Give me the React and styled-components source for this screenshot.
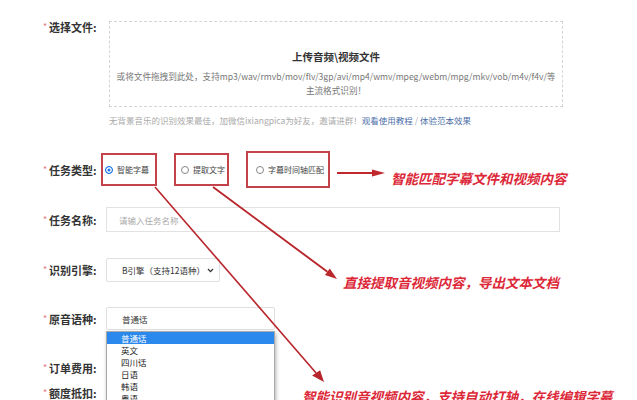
import styled, { createGlobalStyle } from 'styled-components';

const GlobalStyle = createGlobalStyle`
  html, body {
    margin: 0;
    padding: 0;
    background: #ffffff;
    overflow: hidden;
  }
  body {
    font-family: "Noto Sans CJK SC", "Noto Sans", sans-serif;
    color: #333333;
  }
`;

const radioOptions = [
  { label: '智能字幕', checked: true, pad: '0 6px 0 2px', height: 33 },
  { label: '提取文字', checked: false, pad: '0 2px 0 5px', height: 33 },
  { label: '字幕时间轴匹配', checked: false, pad: '0 4px 0 8px', height: 37 },
];

const languages = ['普通话', '英文', '四川话', '日语', '韩语', '粤语'];

const App = () => {
  return (
    <Page>
      <GlobalStyle />
      <Form>
        <FileRow>
          <Label>
            <Star>*</Star>选择文件:
          </Label>
          <FileColumn>
            <DropZone>
              <DropTitle>上传音频\视频文件</DropTitle>
              <DropDesc>
                <span>
                  或将文件拖拽到此处，支持mp3/wav/rmvb/mov/flv/3gp/avi/mp4/wmv/mpeg/webm/mpg/mkv/vob/m4v/f4v/等
                </span>
                <span>主流格式识别！</span>
              </DropDesc>
            </DropZone>
            <Hint>
              无背景音乐的识别效果最佳，加微信ixiangpica为好友，邀请进群！
              <HintLink>观看使用教程</HintLink> / <HintLink>体验范本效果</HintLink>
            </Hint>
          </FileColumn>
        </FileRow>

        <TypeRow>
          <Label>
            <Star>*</Star>任务类型:
          </Label>
          <RadioGroup>
            {radioOptions.map((o) => (
              <RadioOption key={o.label} $pad={o.pad} $height={o.height}>
                <RadioDot $checked={o.checked} />
                {o.label}
              </RadioOption>
            ))}
          </RadioGroup>
          <ArrowIcon width="48" height="10" viewBox="0 0 48 10">
            <line x1="0" y1="5" x2="38" y2="5" stroke="#c0282e" strokeWidth="1.8" />
            <polygon points="35,1.5 48,5 35,8.5" fill="#c0282e" />
          </ArrowIcon>
          <Note $left={6} $top={18}>智能匹配字幕文件和视频内容</Note>
        </TypeRow>

        <NameRow>
          <Label>
            <Star>*</Star>任务名称:
          </Label>
          <TextInput placeholder="请输入任务名称" />
        </NameRow>

        <EngineRow>
          <Label>
            <Star>*</Star>识别引擎:
          </Label>
          <SelectBox $width={114} $height={24}>
            B引擎（支持12语种）
            <Chevron width="7" height="5" viewBox="0 0 7 5">
              <path d="M1 1 L3.5 3.6 L6 1" fill="none" stroke="#333" strokeWidth="1.3" />
            </Chevron>
          </SelectBox>
          <Note $left={123} $top={15}>直接提取音视频内容，导出文本文档</Note>
        </EngineRow>

        <LangRow>
          <Label>
            <Star>*</Star>原音语种:
          </Label>
          <SelectWrap>
            <SelectBox $width={169} $height={23}>普通话</SelectBox>
            <OptionList>
              {languages.map((l, i) => (
                <OptionItem key={l} $active={i === 0}>
                  {l}
                </OptionItem>
              ))}
            </OptionList>
          </SelectWrap>
        </LangRow>

        <PlainRow $top={31}>
          <Label>
            <Star>*</Star>订单费用:
          </Label>
        </PlainRow>

        <PlainRow $top={11}>
          <Label>
            <Star>*</Star>额度抵扣:
          </Label>
          <Note $left={196} $top={1}>智能识别音视频内容，支持自动打轴，在线编辑字幕</Note>
        </PlainRow>
      </Form>

      <Overlay width="637" height="400" viewBox="0 0 637 400">
        <line x1="155" y1="187" x2="316.1" y2="372.9" stroke="#b8262c" strokeWidth="1.6" />
        <polygon points="324,382 312.1,375.5 320.1,370.3" fill="#b8262c" />
        <line x1="213" y1="187" x2="327.4" y2="271.8" stroke="#b8262c" strokeWidth="1.9" />
        <polygon points="337,279 325,275 329.8,268.6" fill="#b8262c" />
      </Overlay>
    </Page>
  );
};

export default App;

const Page = styled.div`
  position: relative;
  width: 637px;
  height: 400px;
  overflow: hidden;
  background: #ffffff;
`;

const Form = styled.div`
  display: flex;
  flex-direction: column;
  padding: 21px 0 0 43px;
`;

const Label = styled.div`
  display: flex;
  align-items: center;
  flex: none;
  width: 63px;
  height: 12px;
  font-size: 11px;
  font-weight: 700;
  line-height: 12px;
  color: #333333;
  white-space: nowrap;
`;

const Star = styled.span`
  width: 6px;
  font-size: 9px;
  font-weight: 400;
  line-height: 12px;
  color: #e77b7b;
`;

const FileRow = styled.div`
  display: flex;
  align-items: flex-start;
`;

const FileColumn = styled.div`
  display: flex;
  flex-direction: column;
  margin-left: 3px;
`;

const DropZone = styled.div`
  display: flex;
  flex-direction: column;
  align-items: center;
  box-sizing: border-box;
  width: 454px;
  height: 86px;
  padding-top: 28px;
  border: 1px dashed #d4d4d4;
`;

const DropTitle = styled.div`
  font-size: 10.5px;
  font-weight: 700;
  line-height: 14px;
  color: #333333;
`;

const DropDesc = styled.div`
  display: flex;
  flex-direction: column;
  align-items: center;
  margin-top: 5px;
  font-size: 8.6px;
  line-height: 14px;
  color: #777777;
  white-space: nowrap;
`;

const Hint = styled.div`
  margin-top: 8px;
  font-size: 8.5px;
  line-height: 10px;
  color: #aaaaaa;
  white-space: nowrap;
`;

const HintLink = styled.span`
  color: #4b6ea8;
`;

const TypeRow = styled.div`
  display: flex;
  align-items: center;
  height: 37px;
  margin-top: 26px;
`;

const RadioGroup = styled.div`
  display: flex;
  align-items: center;
  gap: 17px;
  margin-left: -5px;
`;

const RadioOption = styled.div`
  display: flex;
  align-items: center;
  gap: 4px;
  box-sizing: border-box;
  height: ${(p) => p.$height}px;
  padding: ${(p) => p.$pad};
  border: 2px solid #c4434a;
  font-size: 8px;
  line-height: 10px;
  color: #444444;
  white-space: nowrap;
`;

const RadioDot = styled.span`
  box-sizing: border-box;
  width: 8px;
  height: 8px;
  border-radius: 50%;
  border: 1px solid ${(p) => (p.$checked ? '#1a73e8' : '#888888')};
  background: ${(p) => (p.$checked ? '#1a73e8' : '#ffffff')};
  box-shadow: ${(p) => (p.$checked ? 'inset 0 0 0 1.5px #ffffff' : 'none')};
`;

const ArrowIcon = styled.svg`
  flex: none;
  align-self: flex-start;
  margin: 17px 0 0 7px;
`;

const Note = styled.div`
  flex: none;
  align-self: flex-start;
  margin-left: ${(p) => p.$left}px;
  margin-top: ${(p) => p.$top}px;
  font-size: 13.5px;
  font-weight: 700;
  font-style: italic;
  line-height: 18px;
  color: #dc2838;
  white-space: nowrap;
`;

const NameRow = styled.div`
  display: flex;
  align-items: center;
  margin-top: 19px;
`;

const TextInput = styled.input`
  box-sizing: border-box;
  width: 454px;
  height: 25px;
  margin: 0;
  padding: 0 12px;
  border: 1px solid #e2e2e2;
  font-family: "Noto Sans CJK SC", sans-serif;
  font-size: 8.5px;
  color: #333333;
  outline: none;

  &::placeholder {
    color: #aaaaaa;
  }
`;

const EngineRow = styled.div`
  display: flex;
  align-items: center;
  height: 24px;
  margin-top: 26px;
`;

const SelectBox = styled.div`
  display: flex;
  align-items: center;
  justify-content: space-between;
  box-sizing: border-box;
  width: ${(p) => p.$width}px;
  height: ${(p) => p.$height}px;
  padding: 0 5px 0 15px;
  border: 1px solid #e0e0e0;
  border-radius: 2px;
  background: #ffffff;
  font-size: 8.5px;
  color: #333333;
  white-space: nowrap;
`;

const Chevron = styled.svg`
  flex: none;
`;

const LangRow = styled.div`
  display: flex;
  align-items: center;
  height: 23px;
  margin-top: 25px;
`;

const SelectWrap = styled.div`
  position: relative;
`;

const OptionList = styled.div`
  position: absolute;
  top: 24px;
  left: 0;
  z-index: 2;
  box-sizing: border-box;
  width: 169px;
  border: 1px solid #a8a8a8;
  background: #ffffff;
  box-shadow: 1px 2px 4px rgba(0, 0, 0, 0.3);
`;

const OptionItem = styled.div`
  height: 12px;
  padding-left: 14px;
  font-size: 8.5px;
  line-height: 12px;
  color: ${(p) => (p.$active ? '#ffffff' : '#222222')};
  background: ${(p) => (p.$active ? '#2b88ec' : 'transparent')};
`;

const PlainRow = styled.div`
  display: flex;
  align-items: center;
  height: 14px;
  margin-top: ${(p) => p.$top}px;
`;

const Overlay = styled.svg`
  position: absolute;
  top: 0;
  left: 0;
  z-index: 3;
  pointer-events: none;
`;
